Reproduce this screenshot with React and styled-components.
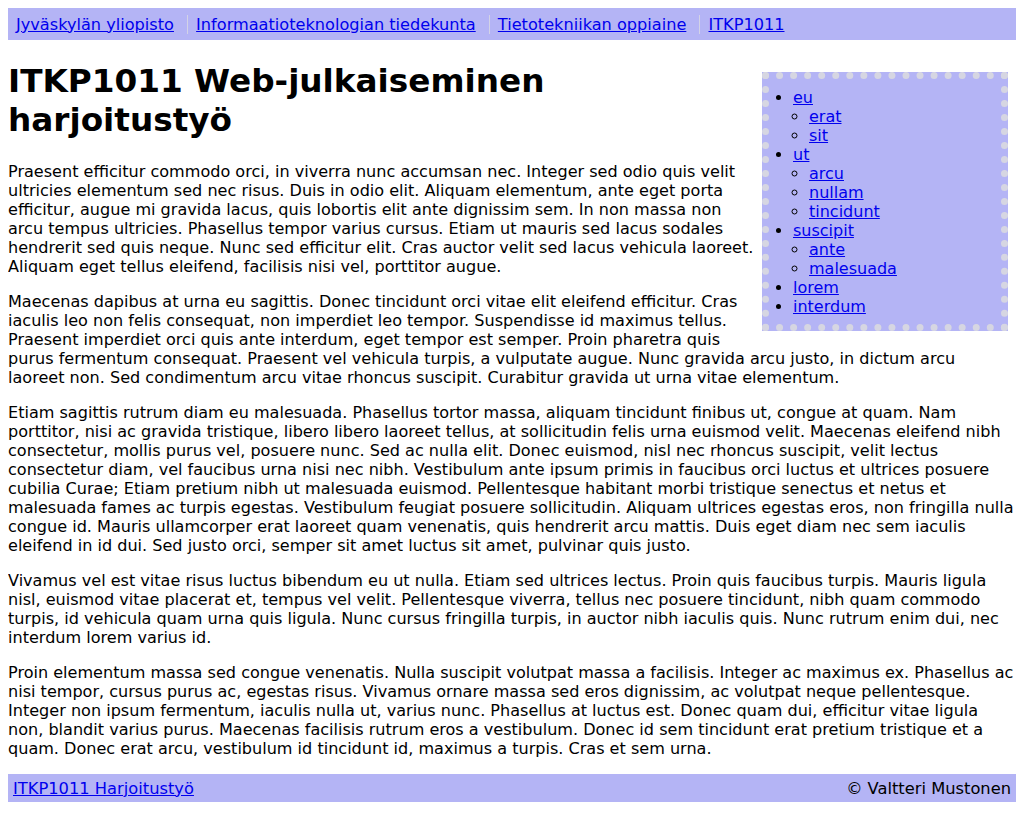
import React from "react";
import styled, { createGlobalStyle } from "styled-components";

const GlobalStyle = createGlobalStyle`
  body {
    margin: 8px;
    font-family: "DejaVu Sans", Verdana, sans-serif;
    font-size: 16px;
    color: #000;
    background: #fff;
  }
  a {
    color: #0000ee;
  }
`;

const crumbs = [
  "Jyväskylän yliopisto",
  "Informaatioteknologian tiedekunta",
  "Tietotekniikan oppiaine",
  "ITKP1011",
];

const menu = [
  { title: "eu", sub: ["erat", "sit"] },
  { title: "ut", sub: ["arcu", "nullam", "tincidunt"] },
  { title: "suscipit", sub: ["ante", "malesuada"] },
  { title: "lorem" },
  { title: "interdum" },
];

const paragraphs = [
  "Praesent efficitur commodo orci, in viverra nunc accumsan nec. Integer sed odio quis velit ultricies elementum sed nec risus. Duis in odio elit. Aliquam elementum, ante eget porta efficitur, augue mi gravida lacus, quis lobortis elit ante dignissim sem. In non massa non arcu tempus ultricies. Phasellus tempor varius cursus. Etiam ut mauris sed lacus sodales hendrerit sed quis neque. Nunc sed efficitur elit. Cras auctor velit sed lacus vehicula laoreet. Aliquam eget tellus eleifend, facilisis nisi vel, porttitor augue.",
  "Maecenas dapibus at urna eu sagittis. Donec tincidunt orci vitae elit eleifend efficitur. Cras iaculis leo non felis consequat, non imperdiet leo tempor. Suspendisse id maximus tellus. Praesent imperdiet orci quis ante interdum, eget tempor est semper. Proin pharetra quis purus fermentum consequat. Praesent vel vehicula turpis, a vulputate augue. Nunc gravida arcu justo, in dictum arcu laoreet non. Sed condimentum arcu vitae rhoncus suscipit. Curabitur gravida ut urna vitae elementum.",
  "Etiam sagittis rutrum diam eu malesuada. Phasellus tortor massa, aliquam tincidunt finibus ut, congue at quam. Nam porttitor, nisi ac gravida tristique, libero libero laoreet tellus, at sollicitudin felis urna euismod velit. Maecenas eleifend nibh consectetur, mollis purus vel, posuere nunc. Sed ac nulla elit. Donec euismod, nisl nec rhoncus suscipit, velit lectus consectetur diam, vel faucibus urna nisi nec nibh. Vestibulum ante ipsum primis in faucibus orci luctus et ultrices posuere cubilia Curae; Etiam pretium nibh ut malesuada euismod. Pellentesque habitant morbi tristique senectus et netus et malesuada fames ac turpis egestas. Vestibulum feugiat posuere sollicitudin. Aliquam ultrices egestas eros, non fringilla nulla congue id. Mauris ullamcorper erat laoreet quam venenatis, quis hendrerit arcu mattis. Duis eget diam nec sem iaculis eleifend in id dui. Sed justo orci, semper sit amet luctus sit amet, pulvinar quis justo.",
  "Vivamus vel est vitae risus luctus bibendum eu ut nulla. Etiam sed ultrices lectus. Proin quis faucibus turpis. Mauris ligula nisl, euismod vitae placerat et, tempus vel velit. Pellentesque viverra, tellus nec posuere tincidunt, nibh quam commodo turpis, id vehicula quam urna quis ligula. Nunc cursus fringilla turpis, in auctor nibh iaculis quis. Nunc rutrum enim dui, nec interdum lorem varius id.",
  "Proin elementum massa sed congue venenatis. Nulla suscipit volutpat massa a facilisis. Integer ac maximus ex. Phasellus ac nisi tempor, cursus purus ac, egestas risus. Vivamus ornare massa sed eros dignissim, ac volutpat neque pellentesque. Integer non ipsum fermentum, iaculis nulla ut, varius nunc. Phasellus at luctus est. Donec quam dui, efficitur vitae ligula non, blandit varius purus. Maecenas facilisis rutrum eros a vestibulum. Donec id sem tincidunt erat pretium tristique et a quam. Donec erat arcu, vestibulum id tincidunt id, maximus a turpis. Cras et sem urna.",
];

const App = () => {
  return (
    <>
      <GlobalStyle />
      <Breadcrumbs>
        {crumbs.map((c, i) => (
          <React.Fragment key={c}>
            <Crumb $first={i === 0}>
              <a href="#">{c}</a>
            </Crumb>{" "}
          </React.Fragment>
        ))}
      </Breadcrumbs>

      <Main>
        <Sidebar>
          <MenuList>
            {menu.map((m) => (
              <li key={m.title}>
                <a href="#">{m.title}</a>
                {m.sub && (
                  <SubList>
                    {m.sub.map((s) => (
                      <li key={s}>
                        <a href="#">{s}</a>
                      </li>
                    ))}
                  </SubList>
                )}
              </li>
            ))}
          </MenuList>
        </Sidebar>

        <Title>ITKP1011 Web-julkaiseminen harjoitustyö</Title>
        {paragraphs.map((p, i) => (
          <Paragraph key={i}>{p}</Paragraph>
        ))}
      </Main>

      <Footer>
        <a href="#">ITKP1011 Harjoitustyö</a>
        <span>© Valtteri Mustonen</span>
      </Footer>
    </>
  );
};

export default App;

const Breadcrumbs = styled.ul`
  margin: 0;
  padding: 6.5px 0;
  list-style: none;
  background-color: #b4b4f5;
  font-size: 16.15px;
  line-height: 19px;
`;

const Crumb = styled.li`
  display: inline;
  padding: 0 8px;
  border-left: ${(p) => (p.$first ? "none" : "1px solid #d3d3e6")};
`;

const Main = styled.main`
  display: flow-root;
`;

const Sidebar = styled.aside`
  float: right;
  width: 216px;
  margin: 32px 8px 8px 8px;
  padding: 9px 8px 8px;
  background-color: #b4b4f5;
  border: 7px dotted #d6d6e2;
  line-height: 19px;
`;

const MenuList = styled.ul`
  margin: 0;
  padding-left: 16px;
`;

const SubList = styled.ul`
  margin: 0;
  padding-left: 16px;
  list-style-type: circle;
`;

const Title = styled.h1`
  font-size: 32.7px;
  line-height: 39px;
  margin: 22px 0;
`;

const Paragraph = styled.p`
  margin: 16px 0;
  font-size: 16.07px;
  line-height: 19px;
`;

const Footer = styled.footer`
  display: flex;
  justify-content: space-between;
  align-items: center;
  padding: 4.5px 5px;
  background-color: #b4b4f5;
  font-size: 16.3px;
  line-height: 19px;
`;
